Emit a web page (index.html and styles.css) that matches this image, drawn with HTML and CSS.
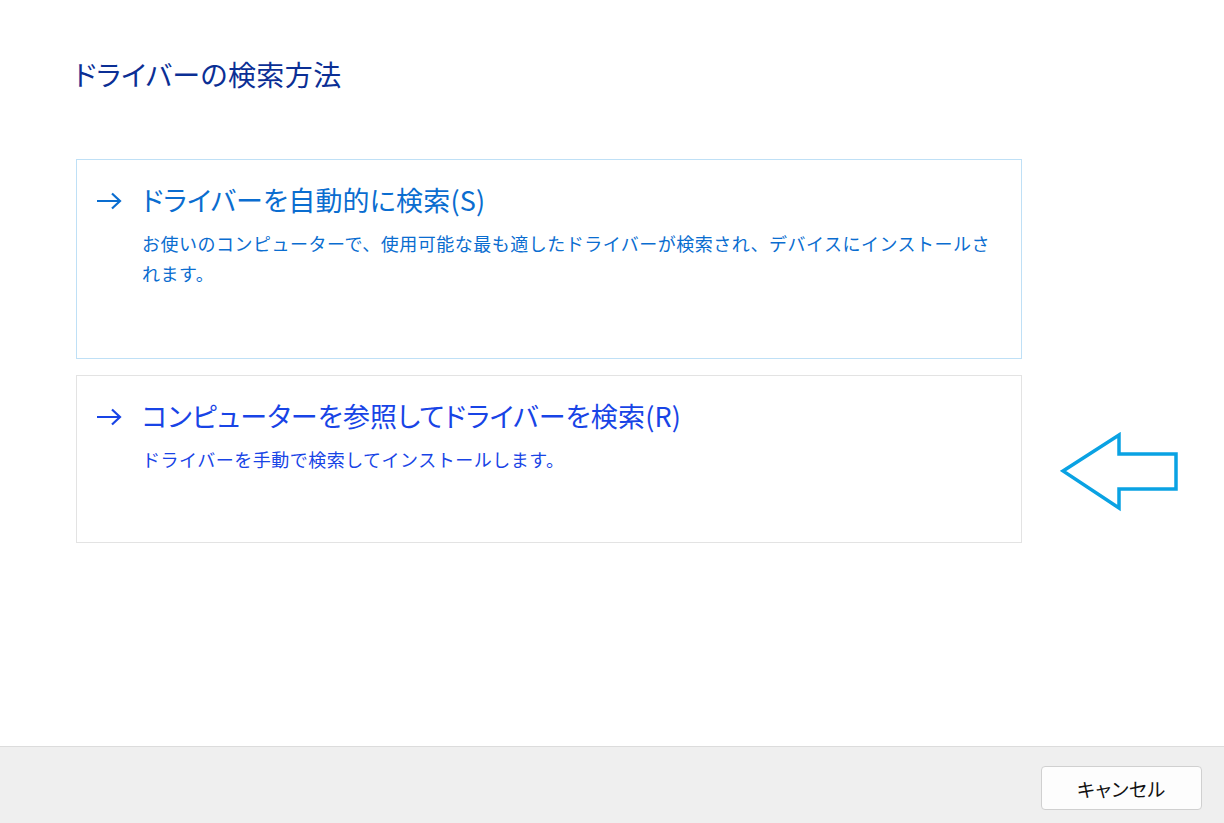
FILE: index.html
```html
<!DOCTYPE html>
<html lang="ja">
<head>
<meta charset="utf-8">
<link rel="stylesheet" href="styles.css">
</head>
<body>
<div class="window">
  <main class="content">
    <h1 class="title">ドライバーの検索方法</h1>
    <div class="options">
      <div class="option option-hover">
        <svg class="go" width="26" height="18" viewBox="0 0 26 18"><path d="M1 9H24M16 1.5L24 9L16 16.5" fill="none" stroke="currentColor" stroke-width="2.2"/></svg>
        <div class="option-text">
          <div class="option-head">ドライバーを自動的に検索(S)</div>
          <div class="option-desc desc-auto">お使いのコンピューターで、使用可能な最も適したドライバーが検索され、デバイスにインストールされます。</div>
        </div>
      </div>
      <div class="option option-plain">
        <svg class="go" width="26" height="18" viewBox="0 0 26 18"><path d="M1 9H24M16 1.5L24 9L16 16.5" fill="none" stroke="currentColor" stroke-width="2.2"/></svg>
        <div class="option-text">
          <div class="option-head">コンピューターを参照してドライバーを検索(R)</div>
          <div class="option-desc">ドライバーを手動で検索してインストールします。</div>
        </div>
      </div>
      <svg class="pointer" width="124" height="80" viewBox="0 0 124 80"><path d="M3 39L59 3V22H116V57H59V76Z" fill="none" stroke="#0aa2e3" stroke-width="3.5" stroke-linejoin="miter"/></svg>
    </div>
  </main>
  <footer class="footer">
    <button class="btn">キャンセル</button>
  </footer>
</div>
</body>
</html>
```

FILE: styles.css
```css
html, body {
  margin: 0;
  padding: 0;
  background: #ffffff;
}
body {
  font-family: "Noto Sans CJK JP", "Noto Sans", sans-serif;
  width: 1224px;
  height: 823px;
  overflow: hidden;
}
.window {
  display: flex;
  flex-direction: column;
  height: 823px;
}
.content {
  height: 746px;
  padding: 0 0 0 72px;
  box-sizing: border-box;
}
.title {
  margin: 0 0 0 2px;
  padding-top: 52px;
  font-size: 28px;
  line-height: 44px;
  font-weight: 400;
  color: #0b2f95;
  font-feature-settings: "palt";
  letter-spacing: 0.4px;
}
.options {
  position: relative;
  margin-top: 63px;
  margin-left: 4px;
  display: flex;
  flex-direction: column;
  gap: 16px;
  width: 946px;
}
.option {
  display: flex;
  align-items: flex-start;
  box-sizing: border-box;
  width: 946px;
  padding: 20px 19px 0 19px;
  border: 1px solid #e3e3e3;
}
.option-hover {
  height: 200px;
  border-color: #bfe0f6;
  color: #0a6dd0;
}
.option-plain {
  height: 168px;
  color: #1844e6;
}
.go {
  flex: none;
  margin-top: 12px;
  margin-right: 20px;
}
.option-text {
  flex: 1;
}
.option-head {
  font-size: 27px;
  line-height: 40px;
  font-feature-settings: "palt";
  letter-spacing: 0.2px;
}
.option-desc {
  font-size: 18px;
  line-height: 30px;
  margin-top: 8px;
  letter-spacing: 0.5px;
  width: 860px;
}
.pointer {
  position: absolute;
  left: 984px;
  top: 273px;
}
.footer {
  flex: 1;
  background: #efefef;
  border-top: 1px solid #dcdcdc;
  display: flex;
  justify-content: flex-end;
  align-items: flex-start;
  padding: 19px 22px 0 0;
}
.btn {
  width: 161px;
  height: 44px;
  background: #fdfdfd;
  border: 1px solid #d0d0d0;
  border-radius: 4px;
  font-family: "Noto Sans CJK JP", "Noto Sans", sans-serif;
  font-size: 19px;
  font-feature-settings: "palt";
  letter-spacing: 0.5px;
  color: #111111;
  padding: 0;
}
```
